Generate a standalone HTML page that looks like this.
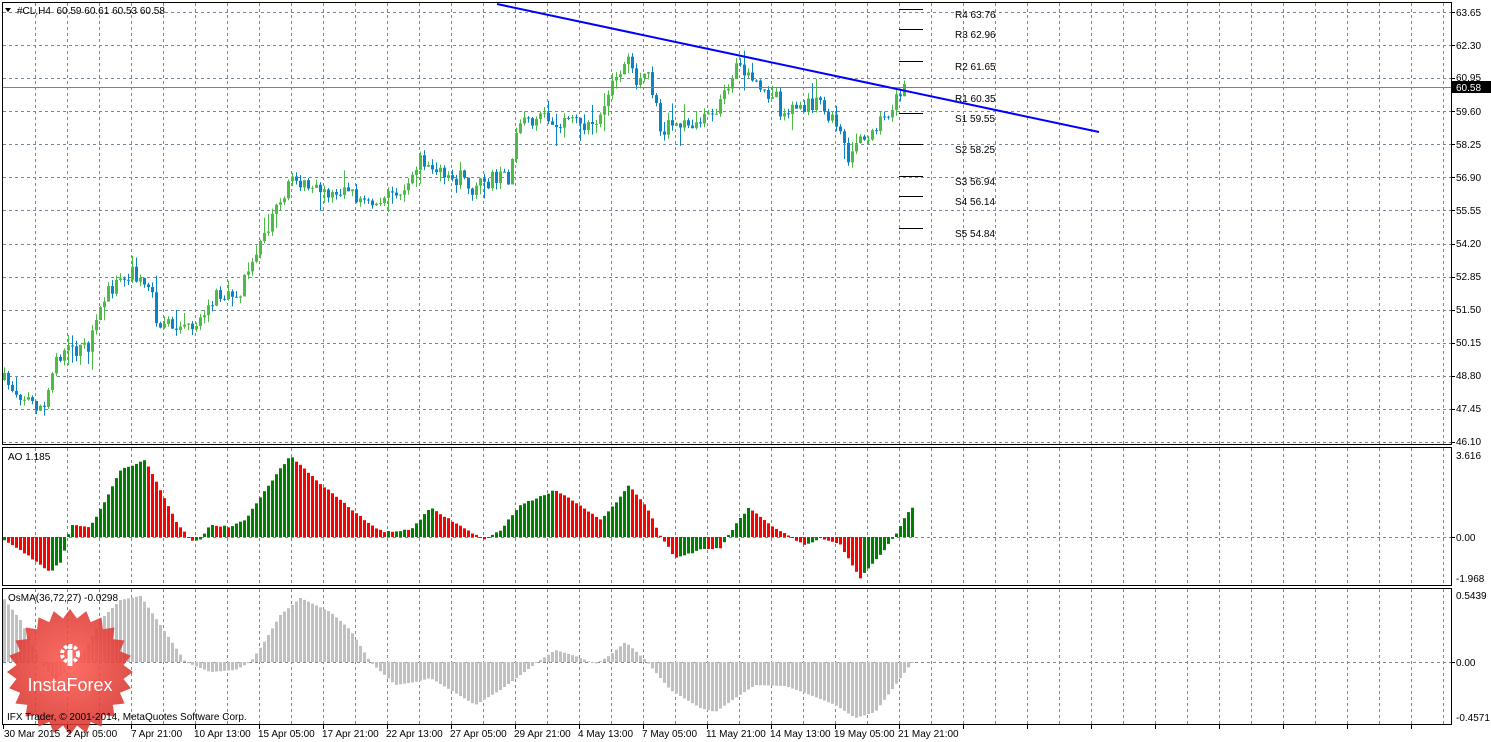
<!DOCTYPE html>
<html><head><meta charset="utf-8"><style>
html,body{margin:0;padding:0;background:#fff;width:1491px;height:742px;overflow:hidden}
svg{display:block;font-family:"Liberation Sans",Arial,sans-serif}
text{font-size:10px;fill:#000}
</style></head><body>
<svg id="s" width="1491" height="742" xmlns="http://www.w3.org/2000/svg">
<defs><radialGradient id="rg" cx="50%" cy="45%" r="55%"><stop offset="0" stop-color="#ff5b52"/><stop offset="1" stop-color="#d8352f"/></radialGradient></defs>
<g id="grid"></g>
<g id="bars"></g>
<line x1="2" y1="87.5" x2="1451" y2="87.5" stroke="#808080" stroke-width="1"/>
<g stroke="#000" stroke-width="1">
<line x1="899" y1="9.5" x2="923" y2="9.5"/><line x1="899" y1="29.5" x2="923" y2="29.5"/>
<line x1="899" y1="61.5" x2="923" y2="61.5"/><line x1="899" y1="113.5" x2="923" y2="113.5"/>
<line x1="899" y1="144.5" x2="923" y2="144.5"/><line x1="899" y1="176.5" x2="923" y2="176.5"/>
<line x1="899" y1="196.5" x2="923" y2="196.5"/><line x1="899" y1="228.5" x2="923" y2="228.5"/>
</g>
<g>
<text x="955" y="18">R4 63.76</text><text x="955" y="38">R3 62.96</text>
<text x="955" y="70">R2 61.65</text><text x="955" y="102">R1 60.35</text>
<text x="955" y="122">S1 59.55</text><text x="955" y="153">S2 58.25</text>
<text x="955" y="185">S3 56.94</text><text x="955" y="205">S4 56.14</text>
<text x="955" y="237">S5 54.84</text>
</g>
<line x1="497" y1="4" x2="1099" y2="132" stroke="#0000ff" stroke-width="2"/>
<g fill="none" stroke="#000" stroke-width="1">
<rect x="2.5" y="2.5" width="1449" height="442"/>
<rect x="2.5" y="447.5" width="1449" height="138"/>
<rect x="2.5" y="588.5" width="1449" height="136"/>
</g>
<g>
<text x="1456" y="16">63.65</text><text x="1456" y="49">62.30</text><text x="1456" y="81">60.95</text>
<text x="1456" y="115">59.60</text><text x="1456" y="148">58.25</text><text x="1456" y="181">56.90</text>
<text x="1456" y="214">55.55</text><text x="1456" y="247">54.20</text><text x="1456" y="280">52.85</text>
<text x="1456" y="313">51.50</text><text x="1456" y="346">50.15</text><text x="1456" y="379">48.80</text>
<text x="1456" y="412">47.45</text><text x="1456" y="445">46.10</text>
<text x="1456" y="459">3.616</text><text x="1456" y="541">0.00</text><text x="1456" y="582">-1.968</text>
<text x="1456" y="599">0.5439</text><text x="1456" y="666">0.00</text><text x="1456" y="721">-0.4571</text>
</g>
<rect x="1452" y="81" width="39" height="12" fill="#000"/>
<text x="1456" y="91" style="fill:#fff">60.58</text>
<path d="M5 8 L11 8 L8 12 Z" fill="#000"/>
<text x="17" y="14">#CL,H4&#160;&#160;60.59 60.61 60.53 60.58</text>
<text x="8" y="460">AO 1.185</text>
<text x="8" y="601">OsMA(36,72,27) -0.0298</text>
<g opacity="0.88">
<polygon id="star" fill="url(#rg)"/>
<circle cx="70" cy="654" r="8" fill="none" stroke="#fff" stroke-width="4" stroke-dasharray="3.2 2"/>
<rect x="67.5" y="650" width="5" height="16" fill="#fff"/>
<circle cx="70" cy="647" r="2.5" fill="#fff"/>
<text x="70" y="691" text-anchor="middle" style="font-size:18px;fill:#fff">InstaForex</text>
</g>
<text x="7" y="720">IFX Trader, © 2001-2014, MetaQuotes Software Corp.</text>
<g>
<text x="4" y="737">30 Mar 2015</text><text x="66" y="737">2 Apr 05:00</text>
<text x="131" y="737">7 Apr 21:00</text><text x="194" y="737">10 Apr 13:00</text>
<text x="258" y="737">15 Apr 05:00</text><text x="322" y="737">17 Apr 21:00</text>
<text x="386" y="737">22 Apr 13:00</text><text x="450" y="737">27 Apr 05:00</text>
<text x="514" y="737">29 Apr 21:00</text><text x="578" y="737">4 May 13:00</text>
<text x="642" y="737">7 May 05:00</text><text x="706" y="737">11 May 21:00</text>
<text x="770" y="737">14 May 13:00</text><text x="834" y="737">19 May 05:00</text>
<text x="898" y="737">21 May 21:00</text>
</g>
<g id="ticks" stroke="#000"></g>
</svg>
<script>
(function(){
var NS="http://www.w3.org/2000/svg";
function el(p,n,a){var e=document.createElementNS(NS,n);for(var k in a)e.setAttribute(k,a[k]);p.appendChild(e);return e;}
var g=document.getElementById('grid'),b=document.getElementById('bars'),t=document.getElementById('ticks');
var ds={stroke:"#778899","stroke-width":1,"stroke-dasharray":"3,3"};
for(var k=0;k<=44;k++){var x=35+32*k+.5;
 [[3,444],[448,585],[589,724]].forEach(function(r){var a=Object.assign({x1:x,x2:x,y1:r[0],y2:r[1]},ds);el(g,'line',a);});}
for(var i=0;i<14;i++){var y=Math.round(12+33.08*i)+.5;el(g,'line',Object.assign({x1:3,x2:1451,y1:y,y2:y},ds));
 el(t,'line',{x1:1451,x2:1455,y1:y,y2:y});}
[537.5,662.5].forEach(function(y){el(g,'line',Object.assign({x1:3,x2:1451,y1:y,y2:y},ds));el(t,'line',{x1:1451,x2:1455,y1:y,y2:y});});
for(var k=0;k<=22;k++){var x=3+64*k+.5;el(t,'line',{x1:x,x2:x,y1:725,y2:729});}
var seed=7;function r(){seed=(seed*16807)%2147483647;return seed/2147483647;}
function interp(P,x){if(x<=P[0][0])return P[0][1];for(var i=1;i<P.length;i++){if(x<=P[i][0]){var a=P[i-1],c=P[i];return a[1]+(c[1]-a[1])*(x-a[0])/(c[0]-a[0]);}}return P[P.length-1][1];}
var PP=[[3,380],[20,395],[45,410],[55,355],[75,350],[90,345],[105,295],[130,270],[150,285],[155,320],[175,325],[195,325],[215,295],[240,290],[250,265],[270,225],[275,200],[295,180],[320,195],[345,190],[370,205],[395,195],[410,185],[420,155],[440,175],[460,178],[475,190],[495,175],[510,180],[515,130],[540,115],[560,125],[580,125],[600,120],[610,85],[625,58],[635,80],[650,80],[660,130],[680,125],[710,120],[720,100],[735,68],[750,75],[760,95],[775,90],[780,110],[800,112],[815,100],[825,115],[840,130],[848,168],[855,140],[875,130],[890,110],[905,88]];
var prev=interp(PP,3);
for(var i=0;i<226;i++){var cx=3+4*i+1;var c=interp(PP,cx)+(r()-.5)*16;var o=prev;
 var hi=Math.min(o,c)-r()*6-(r()<.2?r()*14:0),lo=Math.max(o,c)+r()*6+(r()<.2?r()*14:0);
 var col=c<o?"#4cbb47":"#0a84c6";
 el(b,'line',{x1:cx+.5,x2:cx+.5,y1:hi,y2:lo,stroke:col,"stroke-width":1});
 el(b,'rect',{x:cx-1,y:Math.min(o,c),width:3,height:Math.max(1,Math.abs(c-o)),fill:col});prev=c;}
var AP=[[3,540],[20,550],[50,572],[62,560],[70,525],[90,527],[105,500],[120,470],[145,460],[160,490],[175,520],[190,540],[200,540],[210,525],[230,527],[245,520],[265,490],[290,455],[310,475],[340,500],[370,525],[385,532],[410,530],[430,508],[450,520],[470,532],[485,540],[500,530],[520,505],[555,490],[580,505],[600,520],[610,510],[628,485],[645,505],[660,535],[675,558],[700,550],[720,548],[735,525],[748,508],[770,525],[795,540],[805,546],[820,538],[840,545],[860,578],[880,555],[895,535],[910,508]];
var OP=[[3,598],[20,620],[40,662],[55,680],[70,668],[85,650],[100,620],[120,600],[140,596],[160,625],[185,662],[210,672],[235,670],[250,662],[262,645],[280,615],[300,598],[330,612],[350,630],[370,662],[395,685],[415,682],[430,678],[450,690],[475,705],[500,690],[520,675],[540,660],[555,650],[575,656],[595,664],[610,655],[625,642],[645,660],[670,690],[700,708],[715,712],[735,698],[755,685],[785,686],[810,695],[835,705],[855,718],[875,712],[895,685],[912,662]];
var pa=null;
for(var i=0;i<228;i++){var x=3+4*i;var v=interp(AP,x+1)+(r()-.5)*1.5;
 var col=(pa===null||v<pa)?"#008000":"#ff0000";pa=v;
 el(b,'rect',{x:x,y:Math.min(v,537),width:3,height:Math.max(1,Math.abs(v-537)),fill:col});
 var w=interp(OP,x+1);
 el(b,'rect',{x:x,y:Math.min(w,662),width:3,height:Math.max(1,Math.abs(w-662)),fill:"#c0c0c0"});}
var pts=[];for(var k=0;k<48;k++){var a=k*Math.PI/24,R=k%2?54:63;pts.push((70+R*Math.sin(a)).toFixed(1)+","+(672-R*Math.cos(a)).toFixed(1));}
document.getElementById('star').setAttribute('points',pts.join(' '));
})();
</script>
</body></html>
